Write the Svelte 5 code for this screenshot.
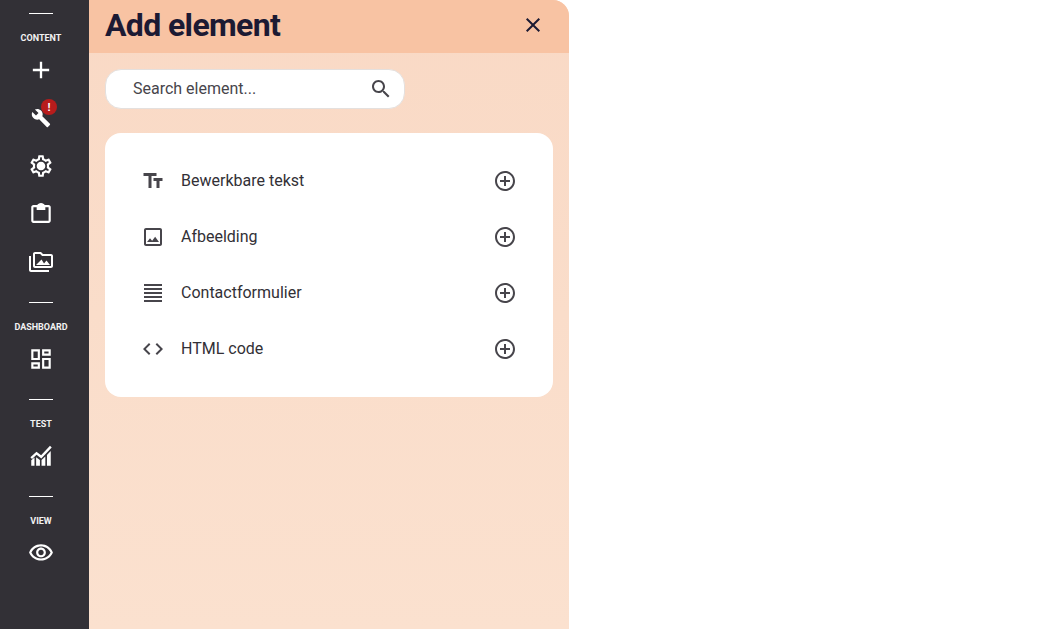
<script>
    const icons = {
        add: 'M19 13h-6v6h-2v-6H5v-2h6V5h2v6h6v2z',
        build: 'M22.7 19l-9.1-9.1c.9-2.3.4-5-1.5-6.9-2-2-5-2.4-7.4-1.3L9 6 6 9 1.6 4.7C.4 7.1.9 10.1 2.9 12.1c1.9 1.9 4.6 2.4 6.9 1.5l9.1 9.1c.4.4 1 .4 1.4 0l2.3-2.3c.5-.4.5-1.1.1-1.4z',
        settings: 'M19.43 12.98c.04-.32.07-.64.07-.98 0-.34-.03-.66-.07-.98l2.11-1.65c.19-.15.24-.42.12-.64l-2-3.46c-.09-.16-.26-.25-.44-.25-.06 0-.12.01-.17.03l-2.49 1c-.52-.4-1.08-.73-1.69-.98l-.38-2.65C14.46 2.18 14.25 2 14 2h-4c-.25 0-.46.18-.49.42l-.38 2.65c-.61.25-1.17.59-1.69.98l-2.49-1c-.06-.02-.12-.03-.18-.03-.17 0-.34.09-.43.25l-2 3.46c-.13.22-.07.49.12.64l2.11 1.65c-.04.32-.07.65-.07.98 0 .33.03.66.07.98l-2.11 1.65c-.19.15-.24.42-.12.64l2 3.46c.09.16.26.25.44.25.06 0 .12-.01.17-.03l2.49-1c.52.4 1.08.73 1.69.98l.38 2.65c.03.24.24.42.49.42h4c.25 0 .46-.18.49-.42l.38-2.65c.61-.25 1.17-.59 1.69-.98l2.49 1c.06.02.12.03.18.03.17 0 .34-.09.43-.25l2-3.46c.12-.22.07-.49-.12-.64l-2.11-1.65zm-1.98-1.71c.04.31.05.52.05.73 0 .21-.02.43-.05.73l-.14 1.13.89.7 1.08.84-.7 1.21-1.27-.51-1.04-.42-.9.68c-.43.32-.84.56-1.25.73l-1.06.43-.16 1.13-.2 1.35h-1.4l-.19-1.35-.16-1.13-1.06-.43c-.43-.18-.83-.41-1.23-.71l-.91-.7-1.06.43-1.27.51-.7-1.21 1.08-.84.89-.7-.14-1.13c-.03-.31-.05-.54-.05-.74s.02-.43.05-.73l.14-1.13-.89-.7-1.08-.84.7-1.21 1.27.51 1.04.42.9-.68c.43-.32.84-.56 1.25-.73l1.06-.43.16-1.13.2-1.35h1.39l.19 1.35.16 1.13 1.06.43c.43.18.83.41 1.23.71l.91.7 1.06-.43 1.27-.51.7 1.21-1.07.85-.89.7.14 1.13zM12 8c-2.21 0-4 1.79-4 4s1.79 4 4 4 4-1.79 4-4-1.79-4-4-4z',
        clipboard: 'M19 3.8h-3.6C15 2.7 13.6 1.8 12 1.8S9 2.7 8.6 3.8H5c-1.1 0-2 .9-2 2v12.4c0 1.1.9 2 2 2h14c1.1 0 2-.9 2-2V5.8c0-1.1-.9-2-2-2zm0 14.4H5V5.8h3v2.4h8V5.8h3v12.4z',
        media: 'M2 6H0v5h.01L0 20c0 1.1.9 2 2 2h18v-2H2V6zm5 9h14l-3.5-4.5-2.5 3.01L12.5 9.5 7 15zM22 4h-8l-2-2H6c-1.1 0-1.99.9-1.99 2L4 16c0 1.1.9 2 2 2h16c1.1 0 2-.9 2-2V6c0-1.1-.9-2-2-2zm0 12H6V4h5.17l1.41 1.41.59.59H22v10z',
        dashboard: 'M19 5v2h-4V5h4M9 5v6H5V5h4m10 8v6h-4v-6h4M9 17v2H5v-2h4M21 3h-8v6h8V3zM11 3H3v10h8V3zm10 8h-8v10h8V11zm-10 4H3v6h8v-6z',
        chart: 'M3 16l3-2.6V21H3zM7.5 13.2l3.5 2.6V21H7.5zM12.5 15.8l3.5-3.4V21h-3.5zM17.5 11l3.5-3.6V21h-3.5zM2.2 13.2L7.8 8l4.3 3.2 8.2-8.6 1.6 1.5-9.6 10.1-4.4-3.3-4.2 3.9z',
        visibility: 'M12 6c3.79 0 7.17 2.13 8.82 5.5C19.17 14.87 15.79 17 12 17s-7.17-2.13-8.82-5.5C4.83 8.13 8.21 6 12 6m0-2C7 4 2.73 7.11 1 11.5 2.73 15.89 7 19 12 19s9.27-3.11 11-7.5C21.27 7.11 17 4 12 4zm0 5c1.38 0 2.5 1.12 2.5 2.5S13.38 14 12 14s-2.5-1.12-2.5-2.5S10.62 9 12 9m0-2c-2.48 0-4.5 2.02-4.5 4.5S9.52 16 12 16s4.5-2.02 4.5-4.5S14.48 7 12 7z',
        text: 'M2.5 4v3h5v12h3V7h5V4h-13zm19 5h-9v3h3v7h3v-7h3V9z',
        image: 'M19 5v14H5V5h14m0-2H5c-1.1 0-2 .9-2 2v14c0 1.1.9 2 2 2h14c1.1 0 2-.9 2-2V5c0-1.1-.9-2-2-2zm-4.86 8.86l-3 3.87L9 13.14 6 17h12l-3.86-5.14z',
        justify: 'M3 21h18v-2H3v2zm0-4h18v-2H3v2zm0-4h18v-2H3v2zm0-4h18V7H3v2zm0-6v2h18V3H3z',
        code: 'M9.4 16.6L4.8 12l4.6-4.6L8 6l-6 6 6 6 1.4-1.4zm5.2 0l4.6-4.6-4.6-4.6L16 6l6 6-6 6-1.4-1.4z',
        plus: 'M13 7h-2v4H7v2h4v4h2v-4h4v-2h-4V7zm-1-5C6.48 2 2 6.48 2 12s4.48 10 10 10 10-4.48 10-10S17.52 2 12 2zm0 18c-4.41 0-8-3.59-8-8s3.59-8 8-8 8 3.59 8 8-3.59 8-8 8z',
        search: 'M15.5 14h-.79l-.28-.27C15.41 12.59 16 11.11 16 9.5 16 5.91 13.09 3 9.5 3S3 5.91 3 9.5 5.91 16 9.5 16c1.61 0 3.09-.59 4.23-1.57l.27.28v.79l5 4.99L20.49 19l-4.99-5zm-6 0C7.01 14 5 11.99 5 9.5S7.01 5 9.5 5 14 7.01 14 9.5 11.99 14 9.5 14z',
        close: 'M19 6.41L17.59 5 12 10.59 6.41 5 5 6.41 10.59 12 5 17.59 6.41 19 12 13.41 17.59 19 19 17.59 13.41 12 19 6.41z',
    }

    // rail glyphs are not all the same size in the original
    const rail_sizes = { add: 28, build: 20, media: 24 }

    const groups = [
        { label: 'CONTENT', items: ['add', 'build', 'settings', 'clipboard', 'media'] },
        { label: 'DASHBOARD', items: ['dashboard'] },
        { label: 'TEST', items: ['chart'] },
        { label: 'VIEW', items: ['visibility'] },
    ]

    const elements = [
        { name: 'Bewerkbare tekst', icon: 'text' },
        { name: 'Afbeelding', icon: 'image' },
        { name: 'Contactformulier', icon: 'justify' },
        { name: 'HTML code', icon: 'code' },
    ]
</script>

{#snippet icon(name, size = 24)}
    <svg width={size} height={size} viewBox="0 0 24 24" fill="currentColor" aria-hidden="true">
        <path d={icons[name]} />
    </svg>
{/snippet}

<div class="page">
    <nav class="rail">
        {#each groups as g}
            <div class="group">
                <span class="rule"></span>
                <span class="label">{g.label}</span>
                {#each g.items as item}
                    <button class="rail-btn">
                        {@render icon(item, rail_sizes[item] ?? 26)}
                        {#if item === 'build'}
                            <span class="badge">!</span>
                        {/if}
                    </button>
                {/each}
            </div>
        {/each}
    </nav>

    <section class="panel">
        <header class="panel-head">
            <h1>Add element</h1>
            <button class="close">{@render icon('close')}</button>
        </header>
        <div class="panel-body">
            <div class="search">
                <span class="placeholder">Search element...</span>
                {@render icon('search')}
            </div>
            <div class="card">
                {#each elements as el}
                    <div class="row">
                        <span class="row-icon">{@render icon(el.icon)}</span>
                        <span class="row-name">{el.name}</span>
                        <span class="row-add">{@render icon('plus')}</span>
                    </div>
                {/each}
            </div>
        </div>
    </section>
</div>

<style>
    :global(body) {
        background: #fff;
        font-family: Roboto, sans-serif;
    }

    .page {
        display: flex;
        height: 629px;
        overflow: hidden;
    }

    .rail {
        width: 89px;
        flex: none;
        background: #323036;
        color: #fff;
        padding: 13px 7px 0 0;
        box-sizing: border-box;
    }

    .group {
        display: flex;
        flex-direction: column;
        align-items: center;
        padding-bottom: 16px;
    }

    .rule {
        width: 24px;
        height: 1px;
        background: #fff;
    }

    .label {
        margin: 18px 0 1px;
        height: 13px;
        line-height: 13px;
        font-size: 9px;
        font-weight: 700;
        color: #f2f2f2;
    }

    .rail-btn {
        position: relative;
        width: 48px;
        height: 48px;
        padding: 0;
        border: none;
        background: none;
        color: inherit;
        display: flex;
        align-items: center;
        justify-content: center;
    }

    .badge {
        position: absolute;
        left: 24px;
        top: 5px;
        width: 16px;
        height: 16px;
        border-radius: 50%;
        background: #b71c1c;
        color: #fff;
        font-size: 11px;
        font-weight: 700;
        line-height: 16px;
        text-align: center;
    }

    .panel {
        width: 480px;
        flex: none;
        display: flex;
        flex-direction: column;
        border-top-right-radius: 16px;
        overflow: hidden;
        background: linear-gradient(#f9d9c5, #fbe1cf);
    }

    .panel-head {
        height: 53px;
        flex: none;
        background: #f8c3a3;
        display: flex;
        align-items: center;
        justify-content: space-between;
        padding: 0 24px 3px 16px;
        box-sizing: border-box;
    }

    h1 {
        margin: 0;
        font-size: 32px;
        font-weight: 700;
        letter-spacing: -0.64px;
        color: #1c1a33;
    }

    .close {
        width: 24px;
        height: 24px;
        padding: 0;
        border: none;
        background: none;
        color: #1c1a33;
    }

    .panel-body {
        padding: 16px;
    }

    .search {
        width: 300px;
        height: 40px;
        box-sizing: border-box;
        border: 1px solid #e4e0de;
        border-radius: 16px;
        background: #fff;
        display: flex;
        align-items: center;
        justify-content: space-between;
        padding: 0 11px 0 27px;
        color: #47454b;
        font-size: 16px;
    }

    .placeholder {
        padding-bottom: 2px;
    }

    .card {
        margin-top: 24px;
        width: 448px;
        box-sizing: border-box;
        background: #fff;
        border-radius: 16px;
        padding: 20px 0;
    }

    .row {
        height: 56px;
        display: flex;
        align-items: center;
        padding: 0 36px;
        color: #47454b;
    }

    .row-icon {
        display: flex;
        margin-right: 16px;
    }

    .row-name {
        flex: 1;
        padding-bottom: 2px;
        font-size: 16px;
        color: #323036;
    }

    .row-add {
        display: flex;
    }
</style>
